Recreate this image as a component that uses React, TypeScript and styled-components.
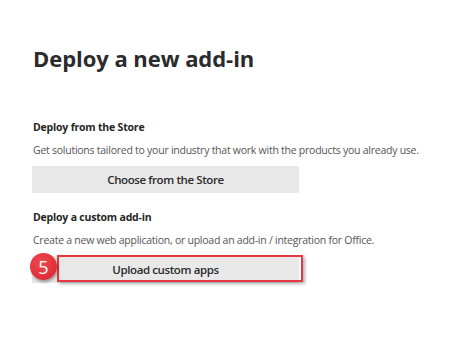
import React from "react";
import styled, { createGlobalStyle } from "styled-components";

const Global = createGlobalStyle`
  html, body { margin: 0; padding: 0; background: #ffffff; }
  body { font-family: "Open Sans", "Noto Sans", sans-serif; }
`;

const Page = styled.div`
  width: 474px;
  height: 346px;
  box-sizing: border-box;
  padding: 44px 0 0 33px;
  display: flex;
  flex-direction: column;
  align-items: flex-start;
`;

const Title = styled.h1`
  margin: 0 0 48px 0;
  font-size: 22px;
  line-height: 28px;
  font-weight: 700;
  color: #2b2b2b;
  letter-spacing: -0.05px;
`;

const Section = styled.section<{ $gap: number }>`
  display: flex;
  flex-direction: column;
  align-items: flex-start;
  margin-bottom: ${(p) => p.$gap}px;
`;

const Heading = styled.h2`
  margin: 0 0 9px 0;
  font-size: 10.5px;
  line-height: 14px;
  font-weight: 700;
  color: #262626;
  letter-spacing: -0.2px;
`;

const Description = styled.p`
  margin: 0 0 9px 0;
  font-size: 10.5px;
  line-height: 14px;
  font-weight: 400;
  color: #555555;
  letter-spacing: -0.25px;
`;

const ButtonWrap = styled.div`
  position: relative;
  margin-left: -1px;
`;

const Button = styled.button`
  width: 267px;
  height: 27px;
  border: none;
  background: #e8e8e8;
  font-family: "Open Sans", "Noto Sans", sans-serif;
  font-size: 11.5px;
  font-weight: 600;
  letter-spacing: -0.4px;
  color: #2b2b2b;
  display: flex;
  align-items: center;
  justify-content: center;
  padding: 0;
`;

const Highlight = styled.div`
  position: absolute;
  left: 25px;
  top: -1px;
  width: 246px;
  height: 27px;
  box-sizing: border-box;
  border: 2px solid #e6393f;
  box-shadow: 2px 2px 3px rgba(0, 0, 0, 0.3);
  pointer-events: none;
`;

const Badge = styled.div`
  position: absolute;
  left: -2px;
  top: -3px;
  width: 27px;
  height: 27px;
  border-radius: 50%;
  background: radial-gradient(circle at 40% 35%, #f0484d 0%, #e2323a 60%, #c8262d 100%);
  box-shadow: 1px 2px 3px rgba(0, 0, 0, 0.35);
  color: #ffffff;
  font-family: "Open Sans", "Noto Sans", sans-serif;
  font-size: 18px;
  font-weight: 400;
  display: flex;
  align-items: center;
  justify-content: center;
  line-height: 1;
`;

export default function App() {
  return (
    <>
      <Global />
      <Page>
        <Title>Deploy a new add-in</Title>
        <Section $gap={17}>
          <Heading>Deploy from the Store</Heading>
          <Description>
            Get solutions tailored to your industry that work with the products you already use.
          </Description>
          <ButtonWrap>
            <Button>Choose from the Store</Button>
          </ButtonWrap>
        </Section>
        <Section $gap={0}>
          <Heading>Deploy a custom add-in</Heading>
          <Description>
            Create a new web application, or upload an add-in / integration for Office.
          </Description>
          <ButtonWrap>
            <Button>Upload custom apps</Button>
            <Highlight />
            <Badge>5</Badge>
          </ButtonWrap>
        </Section>
      </Page>
    </>
  );
}
